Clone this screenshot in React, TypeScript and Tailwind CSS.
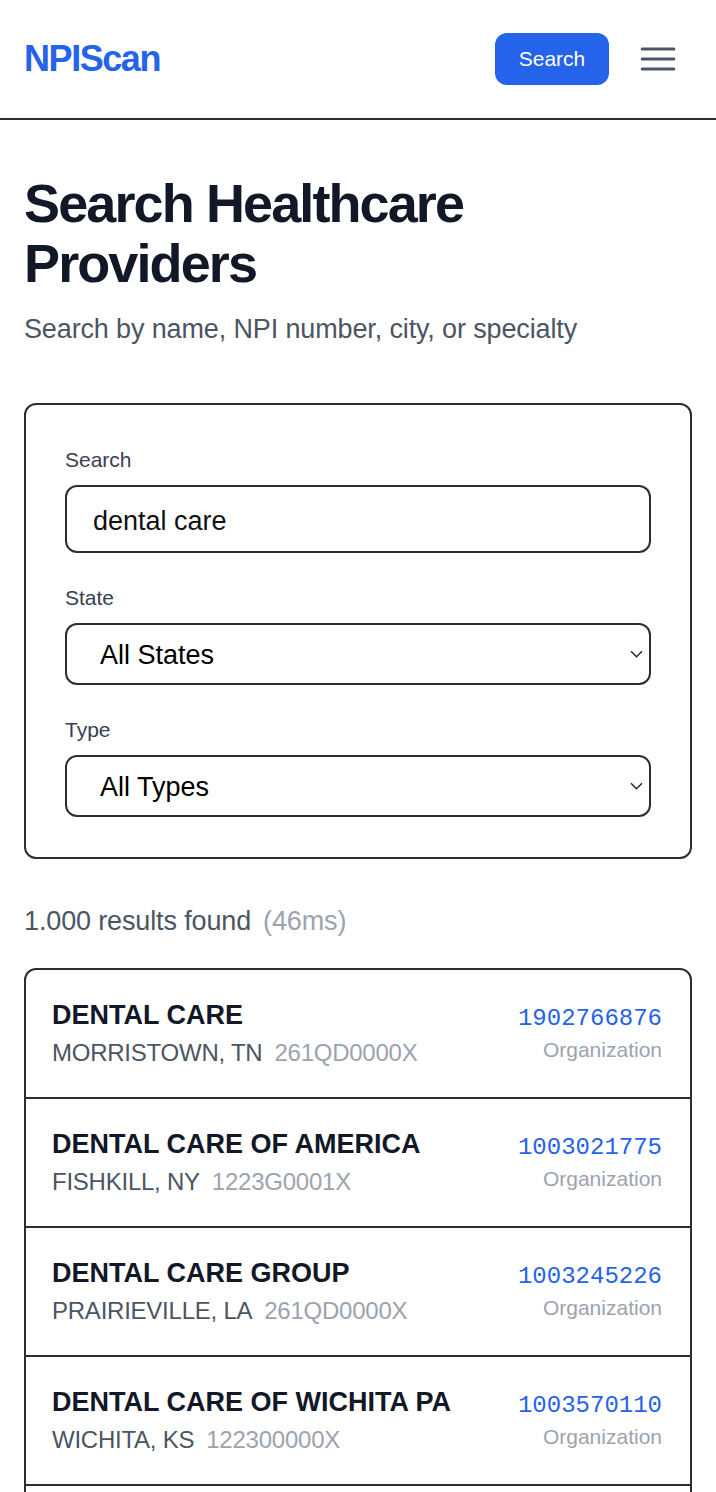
import { useState } from "react";

type Provider = {
  npi: string;
  name: string;
  city: string;
  taxonomy: string;
  kind: string;
};

const providers: Provider[] = [
  { npi: "1902766876", name: "DENTAL CARE", city: "MORRISTOWN, TN", taxonomy: "261QD0000X", kind: "Organization" },
  { npi: "1003021775", name: "DENTAL CARE OF AMERICA", city: "FISHKILL, NY", taxonomy: "1223G0001X", kind: "Organization" },
  { npi: "1003245226", name: "DENTAL CARE GROUP", city: "PRAIRIEVILLE, LA", taxonomy: "261QD0000X", kind: "Organization" },
  { npi: "1003570110", name: "DENTAL CARE OF WICHITA PA", city: "WICHITA, KS", taxonomy: "122300000X", kind: "Organization" },
  { npi: "1003847112", name: "DENTAL CARE ASSOCIATES", city: "BALTIMORE, MD", taxonomy: "1223G0001X", kind: "Organization" },
];

const Chevron = () => (
  <svg
    className="pointer-events-none absolute right-[8px] top-1/2 -translate-y-1/2"
    width="13"
    height="8"
    viewBox="0 0 13 8"
    fill="none"
  >
    <path d="M1 1.2l5.5 5.5L12 1.2" stroke="#222" strokeWidth="1.4" />
  </svg>
);

export default function App() {
  const [query, setQuery] = useState("dental care");

  return (
    <div className="min-h-screen bg-white font-['Liberation_Sans',Arial,sans-serif] text-black">
      <header className="flex h-[120px] items-center justify-between border-b-2 border-[#2e2e2e] pl-6 pr-[35px]">
        <span className="text-[36px] font-bold tracking-[-0.04em] text-[#2563eb]">NPIScan</span>
        <div className="flex items-center gap-[26px]">
          <button className="h-[52px] w-[114px] rounded-[12px] bg-[#2563eb] text-[21px] text-white">
            Search
          </button>
          <svg width="46" height="46" viewBox="0 0 24 24" fill="none" stroke="#4b5563" strokeWidth="1.6">
            <path d="M3.75 6.75h16.5M3.75 12h16.5m-16.5 5.25h16.5" strokeLinecap="round" />
          </svg>
        </div>
      </header>

      <main className="px-6 pt-[53px]">
        <h1 className="text-[54px] font-bold leading-[60px] tracking-[-0.035em] text-[#111827]">
          Search Healthcare Providers
        </h1>
        <p className="mt-[15px] text-[27px] leading-[42px] tracking-[-0.005em] text-[#4b5563]">
          Search by name, NPI number, city, or specialty
        </p>

        <div className="mt-[53px] rounded-[12px] border-2 border-[#2e2e2e] px-[39px] pt-[40px] pb-[40px]">
          <label className="mb-[10px] block text-[21px] leading-[30px] text-[#374151]">Search</label>
          <input
            value={query}
            onChange={(e) => setQuery(e.target.value)}
            className="block h-[68px] w-full rounded-[12px] border-2 border-[#2e2e2e] px-[26px] pt-[5px] text-[27px] text-[#111] outline-none"
          />

          <label className="mt-[30px] mb-[10px] block text-[21px] leading-[30px] text-[#374151]">State</label>
          <div className="relative">
            <select className="block h-[62px] w-full appearance-none rounded-[12px] border-2 border-[#2e2e2e] bg-white pl-[33px] pt-[3px] text-[27px] text-black">
              <option>All States</option>
            </select>
            <Chevron />
          </div>

          <label className="mt-[30px] mb-[10px] block text-[21px] leading-[30px] text-[#374151]">Type</label>
          <div className="relative">
            <select className="block h-[62px] w-full appearance-none rounded-[12px] border-2 border-[#2e2e2e] bg-white pl-[33px] pt-[2px] text-[27px] text-black">
              <option>All Types</option>
            </select>
            <Chevron />
          </div>
        </div>

        <p className="mt-[41px] text-[27px] leading-[42px] tracking-[-0.005em] text-[#4b5563]">
          1.000 results found
          <span className="ml-3 text-[#9ca3af]">(46ms)</span>
        </p>

        <div className="mt-[26px] divide-y-2 divide-[#2e2e2e] rounded-t-[12px] border-2 border-[#2e2e2e]">
          {providers.map((p) => (
            <div key={p.npi} className="flex items-center justify-between pl-[26px] pr-[28px] pt-[24px] pb-[26px]">
              <div>
                <div className="text-[27px] font-bold leading-[42px] text-[#111827]">{p.name}</div>
                <div className="-mt-[1px] text-[24px] leading-[36px] tracking-[-0.01em] text-[#4b5563]">
                  {p.city}
                  <span className="ml-3 text-[#9ca3af]">{p.taxonomy}</span>
                </div>
              </div>
              <div className="text-right">
                <div className="font-['Liberation_Mono',monospace] text-[24px] leading-[36px] text-[#2563eb]">
                  {p.npi}
                </div>
                <div className="-mt-[2px] text-[21px] leading-[30px] text-[#9ca3af]">{p.kind}</div>
              </div>
            </div>
          ))}
        </div>
      </main>
    </div>
  );
}
